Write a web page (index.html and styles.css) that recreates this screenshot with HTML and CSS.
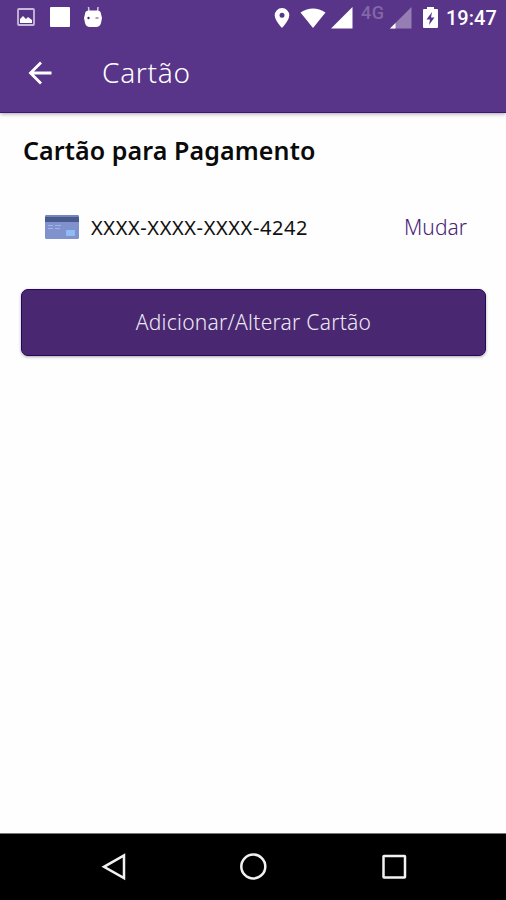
FILE: index.html
```html
<!DOCTYPE html>
<html lang="pt-BR">
<head>
    <meta charset="UTF-8">
    <meta name="viewport" content="width=device-width, initial-scale=1.0">
    <title>Cartão</title>
    <link rel="stylesheet" href="styles.css">
</head>
<body>
    <div class="screen">
        <header class="header">
            <!-- Barra de status -->
            <div class="status-bar">
                <div class="status-left">
                    <svg width="18" height="18" viewBox="0 0 18 18">
                        <rect x="1" y="1" width="16" height="16" rx="1" fill="none" stroke="#c9b9dc" stroke-width="1.8"/>
                        <path d="M3 15v-4l3-3 3 3 2-2 4 3v3z" fill="#fff"/>
                    </svg>
                    <svg class="square" width="20" height="20" viewBox="0 0 20 20">
                        <rect width="20" height="20" rx="1" fill="#fff"/>
                    </svg>
                    <svg width="18" height="20" viewBox="0 0 18 20">
                        <path d="M5 5L4.500 0M13.500 5L14 0" stroke="#d5c8e4" stroke-width="1.500"/>
                        <path d="M1 7Q1 4 4 3.500h10q3 .5 3 3.500l1 4-1 5q-1 4-5 4H6q-4 0-5-4l-1-5z" fill="#fff"/>
                        <circle cx="4.500" cy="11" r="1.200" fill="#452276"/>
                        <path d="M11.500 11h3" stroke="#8c74ae" stroke-width="1.400"/>
                    </svg>
                </div>
                <div class="status-right">
                    <svg width="16" height="20" viewBox="0 0 16 20">
                        <path d="M8 0a7.300 7.300 0 0 0-7.300 7.300C.7 12.500 8 20 8 20s7.300-7.500 7.300-12.700A7.300 7.300 0 0 0 8 0zm0 4.800a2.500 2.500 0 1 1 0 5 2.500 2.500 0 0 1 0-5z" fill="#fff"/>
                    </svg>
                    <svg class="wifi" width="26" height="20" viewBox="0 0 26 20">
                        <path d="M.5 4.500Q13-3.500 25.500 4.500L13 20z" fill="#fff"/>
                    </svg>
                    <svg class="signal" width="22" height="22" viewBox="0 0 22 22">
                        <path d="M21.500 0v21.500H0z" fill="#fff"/>
                    </svg>
                    <span class="network">4G</span>
                    <svg class="signal-weak" width="22" height="22" viewBox="0 0 22 22">
                        <path d="M21.500 0v21.500H0z" fill="#967eb5"/>
                        <path d="M5.500 16v5.500H0z" fill="#fff"/>
                    </svg>
                    <svg class="battery" width="15" height="21" viewBox="0 0 15 21">
                        <path d="M4 2V0h7v2h3q1 0 1 1v17q0 1-1 1H1q-1 0-1-1V3q0-1 1-1z" fill="#fff"/>
                        <path d="M9 5L3.500 12.500H7L6 18l5.500-7.500H8z" fill="#59358a"/>
                    </svg>
                    <span class="clock">19:47</span>
                </div>
            </div>
            <!-- Barra do aplicativo -->
            <div class="app-bar">
                <svg width="24" height="24" viewBox="0 0 24 24" fill="none" stroke="#fff" stroke-width="2.800">
                    <path d="M23.500 12H3M13 1.500L2.500 12 13 22.500"/>
                </svg>
                <h1>Cartão</h1>
            </div>
        </header>

        <main class="content">
            <h2>Cartão para Pagamento</h2>
            <div class="card-row">
                <svg class="card-icon" width="34" height="26" viewBox="0 0 34 26">
                    <rect y="1" width="34" height="24" rx="1.500" fill="#7f92cd"/>
                    <path d="M0 3q0-2 2-2h30q2 0 2 2H0z" fill="#7186bd"/>
                    <rect y="3" width="34" height="5" fill="#4b5a8c"/>
                    <path d="M3 11.500h5M10 11.500h6M3 14.500h5M10 14.500h5" stroke="#a3b4e5" stroke-width="1.200"/>
                    <rect x="21" y="16" width="9" height="6" rx="1" fill="#8fbcf3"/>
                </svg>
                <span class="card-number">XXXX-XXXX-XXXX-4242</span>
                <a class="change-link">Mudar</a>
            </div>
            <button class="add-button">Adicionar/Alterar Cartão</button>
        </main>

        <!-- Navegação do sistema -->
        <nav class="nav-bar">
            <svg width="28" height="28" viewBox="0 0 28 28">
                <path d="M26 2.500v22.500L6 13.800z"/>
            </svg>
            <svg width="28" height="28" viewBox="0 0 28 28">
                <circle cx="14.300" cy="13.500" r="12"/>
            </svg>
            <svg width="28" height="28" viewBox="0 0 28 28">
                <rect x="3.500" y="3" width="21.500" height="21.500" rx=".5"/>
            </svg>
        </nav>
    </div>
</body>
</html>
```
FILE: styles.css
```css
* {
    margin: 0;
    padding: 0;
    box-sizing: border-box;
}

body {
    font-family: "Noto Sans", sans-serif;
    background: #fefefe;
}

svg {
    display: block;
    flex-shrink: 0;
}

.screen {
    height: 900px;
    display: flex;
    flex-direction: column;
}

.header {
    height: 113px;
    background: #593589;
    border-bottom: 1px solid #421475;
    box-shadow: 0 1px 4px rgba(0, 0, 0, 0.35);
    color: #fff;
}

.status-bar {
    height: 35px;
    padding: 0 10px 0 17px;
    display: flex;
    justify-content: space-between;
    align-items: center;
}

.status-left,
.status-right {
    display: flex;
    align-items: center;
}

.status-left {
    padding-bottom: 2px;
}

.square {
    margin: 0 14px 0 15px;
}

.wifi {
    margin-left: 10px;
}

.signal {
    margin-left: 5px;
}

.network {
    width: 25px;
    margin: 0 4px 9px 8px;
    font: 500 18px/20px Roboto, sans-serif;
    letter-spacing: 0.5px;
    color: #8267a8;
}

.battery {
    margin-left: 11px;
}

.clock {
    width: 50px;
    margin-left: 8px;
    font: 500 20px/24px Roboto, sans-serif;
}

.app-bar {
    height: 77px;
    padding: 0 0 2px 28px;
    display: flex;
    align-items: center;
}

.app-bar h1 {
    margin-left: 50px;
    padding-bottom: 2px;
    font-size: 28px;
    font-weight: 300;
    line-height: 38px;
    letter-spacing: 0.7px;
}

.content {
    flex: 1;
    padding: 18px 20px 0 21px;
}

.content h2 {
    padding-left: 2px;
    font-size: 25px;
    font-weight: 600;
    line-height: 38px;
    letter-spacing: 0.1px;
    color: #0a0a0a;
}

.card-row {
    height: 40px;
    margin: 38px 19px 42px 24px;
    display: flex;
    align-items: center;
}

.card-number {
    margin-left: 12px;
    font-size: 20px;
    letter-spacing: 0.6px;
    color: #111;
}

.change-link {
    margin-left: auto;
    font-size: 21px;
    font-weight: 300;
    color: #482374;
}

.add-button {
    width: 100%;
    height: 67px;
    padding-bottom: 2px;
    border: 1px solid #29065e;
    border-radius: 7px;
    background: #492871;
    box-shadow: 0 1px 3px rgba(0, 0, 0, 0.35);
    font-family: inherit;
    font-size: 21px;
    font-weight: 300;
    letter-spacing: 0.25px;
    color: #eee8f6;
}

.nav-bar {
    height: 67px;
    padding: 0 98px;
    display: flex;
    justify-content: space-between;
    align-items: center;
    background: #000;
    border-top: 1px solid #777;
}

.nav-bar svg {
    fill: none;
    stroke: #f2f2f2;
    stroke-width: 2.5;
}
```
